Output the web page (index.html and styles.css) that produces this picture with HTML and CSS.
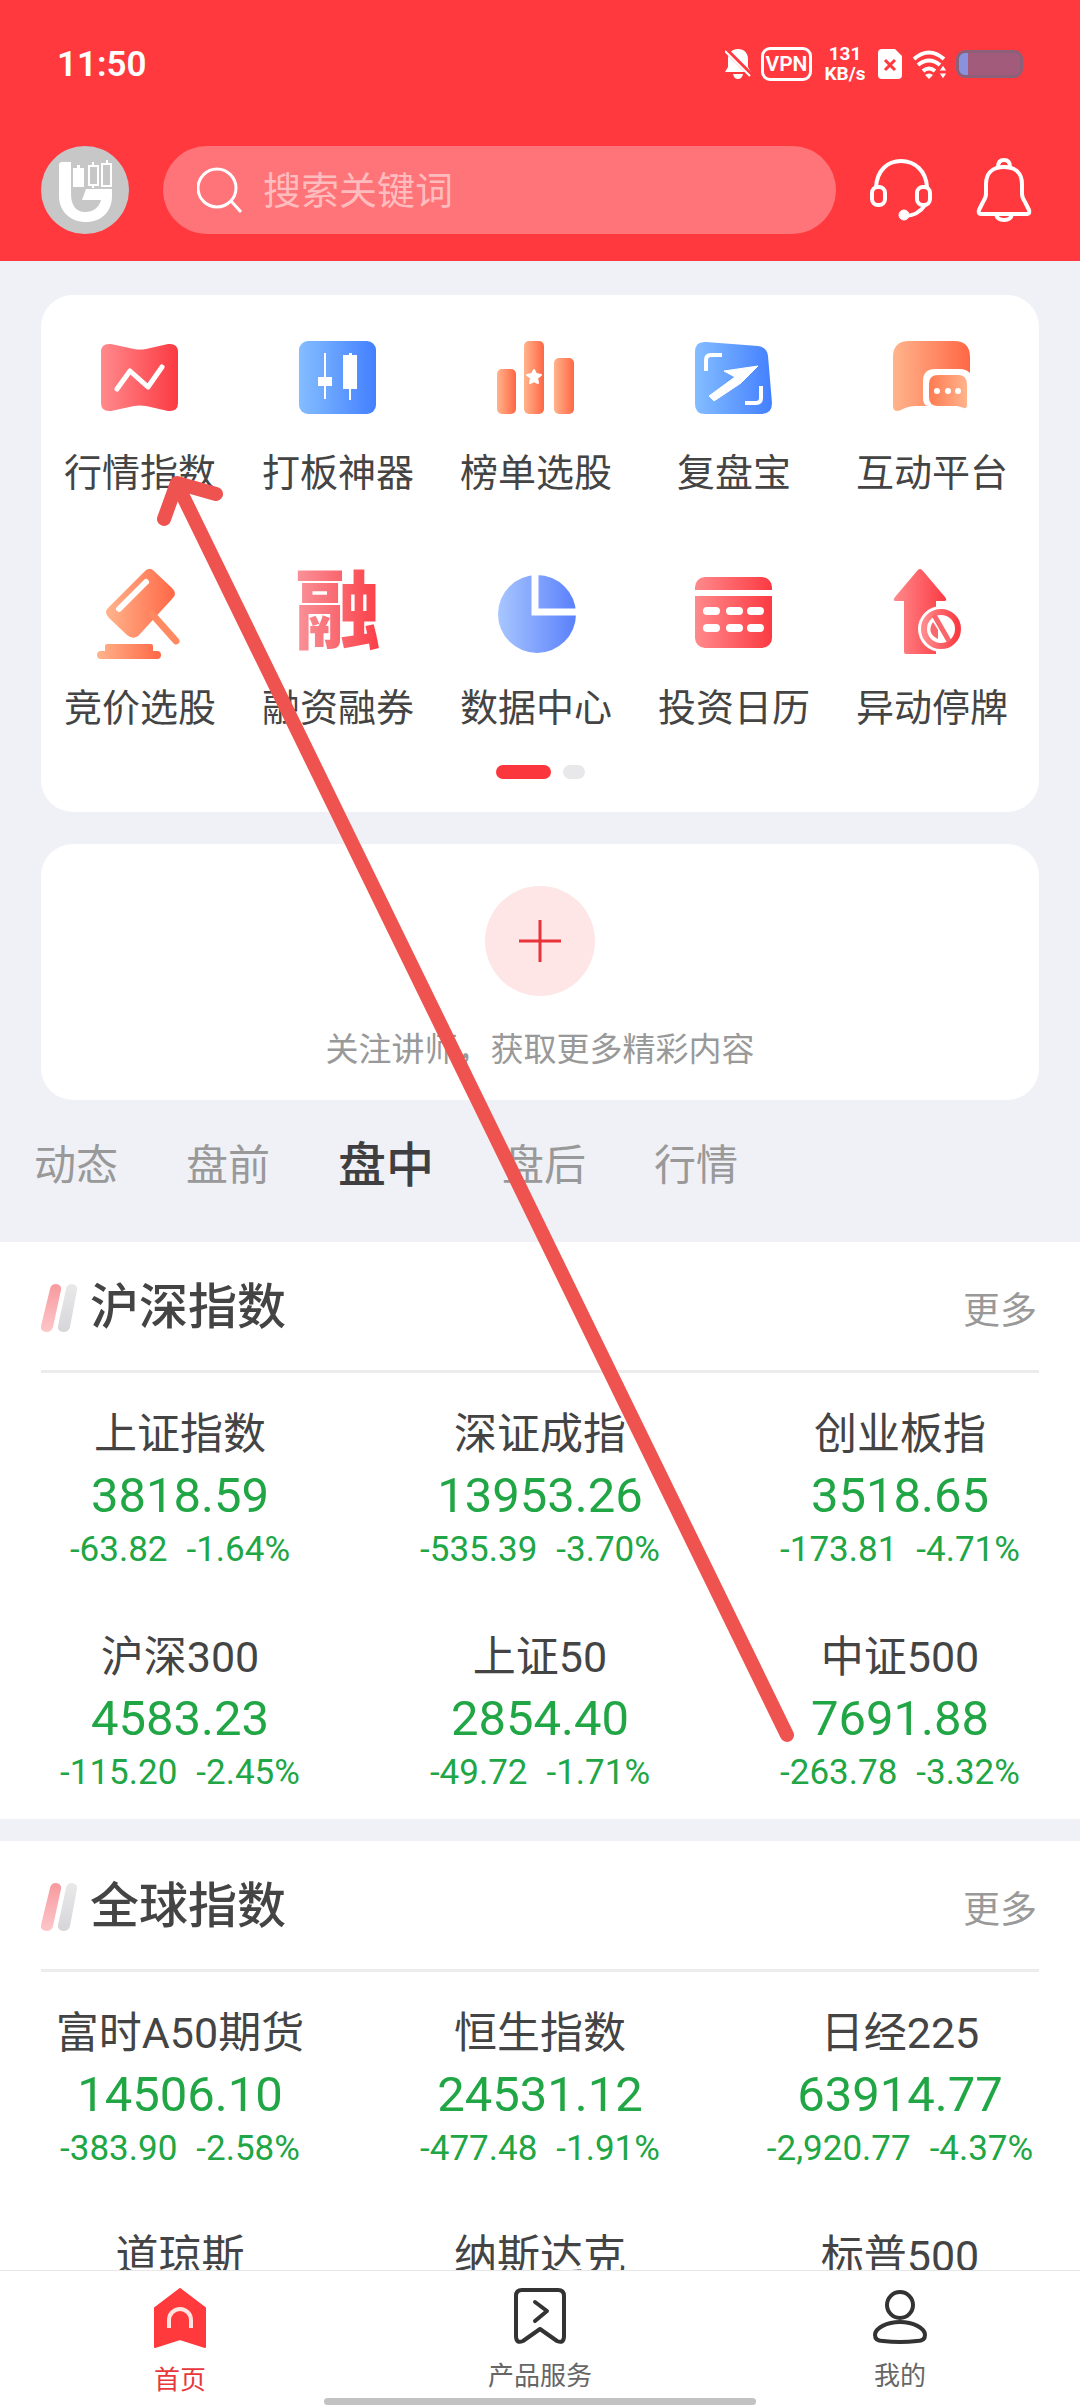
FILE: index.html
```html
<!DOCTYPE html>
<html lang="zh-CN">
<head>
  <meta charset="UTF-8">
  <meta name="viewport" content="width=device-width, initial-scale=1.0">
  <title>首页</title>
  <link rel="stylesheet" href="styles.css">
</head>
<body>

  <!-- Shared gradients -->
  <svg class="defs" width="0" height="0" aria-hidden="true">
    <defs>
      <linearGradient id="red"><stop offset="0" stop-color="#ff8a8c"/><stop offset="1" stop-color="#fb3a42"/></linearGradient>
      <linearGradient id="blue"><stop offset="0" stop-color="#84bdff"/><stop offset="1" stop-color="#4380ff"/></linearGradient>
      <linearGradient id="pie"><stop offset="0" stop-color="#a8c6ff"/><stop offset="1" stop-color="#5a80fb"/></linearGradient>
      <linearGradient id="orange"><stop offset="0" stop-color="#ffb48c"/><stop offset="1" stop-color="#ff6745"/></linearGradient>
      <linearGradient id="orangeBack"><stop offset="0" stop-color="#ff7a52"/><stop offset="1" stop-color="#ffb48c"/></linearGradient>
      <linearGradient id="slash" x1="0" y1="0" x2="0" y2="1"><stop offset="0" stop-color="#f79a9f"/><stop offset="1" stop-color="#fdc6c8"/></linearGradient>
      <linearGradient id="slashGray" x1="0" y1="0" x2="0" y2="1"><stop offset="0" stop-color="#e9e9ea"/><stop offset="1" stop-color="#d6d6d9"/></linearGradient>
      <symbol id="slashes" viewBox="0 0 40 48">
        <path fill="url(#slash)" d="M9 5Q10 0 15 0Q21 1 20 6L12 43Q11 48 5 48Q-1 47 0 42Z"/>
        <path fill="url(#slashGray)" d="M25 5Q26 0 31 0Q37 1 36 6L29 43Q28 48 22 48Q16 47 17 42Z"/>
      </symbol>
    </defs>
  </svg>

  <header class="header">
    <div class="status-bar">
      <span class="time">11:50</span>
      <div class="status-icons">
        <svg width="26" height="30" viewBox="0 0 26 30">
          <path fill="#fff" d="M13 0c6 0 10 4 10 10v8l3 5H0l3-5v-8C3 4 7 0 13 0zM8 25h10q-1 5-5 5t-5-5z"/>
          <path stroke="#ff393e" stroke-width="5" d="M0 0l27 27"/>
          <path stroke="#fff" stroke-width="2" d="M0 2l25 25"/>
        </svg>
        <span class="vpn">VPN</span>
        <span class="speed">131<br>KB/s</span>
        <svg width="24" height="30" viewBox="0 0 24 30">
          <path fill="#fff" d="M4 0h13l7 7v19q0 4-4 4H4q-4 0-4-4V4q0-4 4-4z"/>
          <path stroke="#ff393e" stroke-width="3" d="M7 11l10 10M17 11L7 21"/>
        </svg>
        <svg width="34" height="29" viewBox="0 0 34 29" fill="none" stroke="#fff" stroke-width="4">
          <path d="M2 9q15-13 30 0M6 15q11-9 22 0M11 21q6-5 12 0"/>
          <path fill="#fff" stroke="none" d="M13 25q4-3 8 0l-4 4z"/>
          <path fill="#fff" stroke="#ff393e" stroke-width="1" d="M27 21l4-6 4 6zM27 23h8l-4 6z"/>
        </svg>
        <span class="battery"></span>
      </div>
    </div>

    <div class="search-row">
      <a href="#" class="avatar" aria-label="个人中心">
        <svg width="88" height="88" viewBox="0 0 88 88">
          <circle cx="44" cy="44" r="44" fill="#c7c7c7"/>
          <path fill="#fff" d="M18 19q0-3 3-3h9v32c0 11 5 18 14 18 8 0 14-4 16-12H41l4-11h26v7c0 16-11 26-26 26S18 66 18 50z"/>
          <path fill="#fff" d="M32 22h4v-3h3v3h4v19H32z"/>
          <path fill="none" stroke="#fff" stroke-width="2" d="M48 20h9v19h-9zM52 16v4M52 39v3M61 18h9v22h-9zM66 14v4"/>
        </svg>
      </a>
      <div class="search">
        <label for="searchInput" aria-label="搜索">
          <svg width="46" height="46" viewBox="0 0 46 46" fill="none" stroke="#fff" stroke-width="3">
            <circle cx="20" cy="21" r="19"/>
            <path d="M34 34l10 11"/>
          </svg>
        </label>
        <input type="text" id="searchInput" placeholder="搜索关键词">
      </div>
      <button class="icon-button" aria-label="客服">
        <svg width="64" height="64" viewBox="0 0 64 64" fill="none" stroke="#fff" stroke-width="4">
          <path d="M6 29C7 13 17 3 31 3s25 10 26 26"/>
          <rect x="2" y="29" width="13" height="18" rx="6"/>
          <rect x="47" y="29" width="13" height="18" rx="6"/>
          <path d="M55 47Q48 58 34 58"/>
          <circle cx="34" cy="57" r="5" fill="#fff" stroke-width="1"/>
        </svg>
      </button>
      <button class="icon-button bell" aria-label="消息">
        <svg width="64" height="64" viewBox="0 0 64 64" fill="none" stroke="#fff" stroke-width="4" stroke-linejoin="round">
          <path d="M32 9C20 9 14 16 14 26v10c0 3-1 5-3 8L7 52q-1 4 2 4h46q3 0 2-4l-4-8c-2-3-3-5-3-8V26C50 16 44 9 32 9z"/>
          <path d="M26 9q0-7 6-7t6 7M24 56q1 6 8 6t8-6"/>
        </svg>
      </button>
    </div>
  </header>

  <main class="content">
    <section class="card menu-card">
      <nav class="menu">
        <a href="#" class="menu-item">
          <svg class="menu-icon" viewBox="0 0 92 92">
            <path fill="url(#red)" d="M7 20Q7 11 17 12L40 17Q46 18 52 17L74 12Q84 11 84 20V71Q84 80 74 79L52 74Q46 73 40 74L17 79Q7 80 7 71Z"/>
            <path fill="none" stroke="#fff" stroke-width="5" stroke-linecap="round" stroke-linejoin="round" d="M23 57L36 39L54 55L68 35"/>
          </svg>
          <span>行情指数</span>
        </a>
        <a href="#" class="menu-item">
          <svg class="menu-icon" viewBox="0 0 92 92">
            <rect x="7" y="9" width="77" height="73" rx="9" fill="url(#blue)"/>
            <path fill="#fff" d="M32 21h2v24h6v9h-6v13h-2V54h-6v-9h6zM57 21h3v2h5v34h-6v11h-2V57h-6V23h6z"/>
          </svg>
          <span>打板神器</span>
        </a>
        <a href="#" class="menu-item">
          <svg class="menu-icon" viewBox="0 0 92 92">
            <rect x="7" y="37" width="19" height="45" rx="5" fill="url(#orange)"/>
            <rect x="34" y="9" width="20" height="73" rx="5" fill="url(#orange)"/>
            <rect x="64" y="26" width="20" height="56" rx="5" fill="url(#orange)"/>
            <path fill="#fff" stroke="#fff" stroke-width="2" stroke-linejoin="round" d="M44 38l2 4 5 1-4 3 1 5-4-2-4 2 1-5-4-3 5-1z"/>
          </svg>
          <span>榜单选股</span>
        </a>
        <a href="#" class="menu-item">
          <svg class="menu-icon" viewBox="0 0 92 92">
            <path fill="url(#blue)" d="M7 20Q7 9 18 10L70 14Q79 15 80 24L84 71Q84 82 73 82H17Q7 82 7 72Z"/>
            <path fill="none" stroke="#fff" stroke-width="4" d="M18 39V28Q18 23 23 23H34M73 54V66Q73 71 68 71H57"/>
            <path fill="#fff" stroke="#fff" stroke-linejoin="round" d="M70 34L36 39L47 45L21 64L26 69L53 51Z"/>
          </svg>
          <span>复盘宝</span>
        </a>
        <a href="#" class="menu-item">
          <svg class="menu-icon" viewBox="0 0 92 92">
            <path fill="url(#orange)" d="M7 25Q7 9 23 9H68Q84 9 84 25V42L78 74H30Q22 74 15 78Q7 81 7 74Z"/>
            <path fill="#fff" d="M37 49Q37 37 49 37H75Q81 37 86 43V84H42V74Q37 73 37 66Z"/>
            <path fill="url(#orangeBack)" d="M43 52Q43 43 52 43H72Q81 43 81 52V73Q81 78 75 75L71 74H52Q43 74 43 65Z"/>
            <path fill="none" stroke="#fff" stroke-width="6" stroke-linecap="round" d="M51 59h0M62 59h0M72 59h0"/>
          </svg>
          <span>互动平台</span>
        </a>
        <a href="#" class="menu-item">
          <svg class="menu-icon" viewBox="0 0 92 92">
            <path fill="url(#orange)" d="M50 5Q55 -1 60 4L78 21Q84 27 78 32L46 67Q40 74 33 68L15 51Q9 45 15 40Z"/>
            <path stroke="#fff" stroke-width="6" stroke-linecap="round" d="M25 42L52 15"/>
            <path stroke="#ff8a62" stroke-width="7" stroke-linecap="round" d="M58 47L82 74"/>
            <path fill="url(#orange)" d="M13 77H57Q59 77 59 79V84H63Q67 84 67 88T63 92H7Q3 92 3 88T7 84H11V79Q11 77 13 77Z"/>
          </svg>
          <span>竞价选股</span>
        </a>
        <a href="#" class="menu-item">
          <span class="menu-icon menu-glyph">融</span>
          <span>融资融券</span>
        </a>
        <a href="#" class="menu-item">
          <svg class="menu-icon" viewBox="0 0 92 92">
            <circle cx="47" cy="47" r="39" fill="url(#pie)"/>
            <path fill="none" stroke="#fff" stroke-width="7" d="M45 6V45H88"/>
          </svg>
          <span>数据中心</span>
        </a>
        <a href="#" class="menu-item">
          <svg class="menu-icon" viewBox="0 0 92 92">
            <rect x="7" y="10" width="77" height="71" rx="10" fill="url(#red)"/>
            <path stroke="#fff" stroke-width="6" d="M6 26H85"/>
            <path stroke="#fff" stroke-width="8" stroke-linecap="round" d="M19 44h9M42 44h9M63 44h9M19 61h9M42 61h9M63 61h9"/>
          </svg>
          <span>投资日历</span>
        </a>
        <a href="#" class="menu-item">
          <svg class="menu-icon" viewBox="0 0 92 92">
            <path fill="url(#red)" d="M31 4Q34 0 37 4L59 30Q62 34 58 34H50V87H20Q18 87 18 85V34H10Q6 34 9 30Z"/>
            <circle cx="55" cy="62" r="23" fill="#fff"/>
            <circle cx="55" cy="62" r="17" fill="none" stroke="url(#red)" stroke-width="6"/>
            <path fill="none" stroke="#f9666b" stroke-width="5" d="M48 48L63 74"/>
            <path fill="#f9666b" d="M47 55L52 63V72Q40 66 47 55Z"/>
          </svg>
          <span>异动停牌</span>
        </a>
      </nav>
      <div class="pager">
        <span class="pager-dot active"></span>
        <span class="pager-dot"></span>
      </div>
    </section>

    <section class="card follow-card">
      <button class="follow-button" aria-label="关注讲师">
        <svg width="42" height="42" viewBox="0 0 42 42" stroke="#e8333b" stroke-width="3">
          <path d="M21 0V42M0 21H42"/>
        </svg>
      </button>
      <p>关注讲师，获取更多精彩内容</p>
    </section>

    <div class="tabs">
      <button class="tab">动态</button>
      <button class="tab">盘前</button>
      <button class="tab active">盘中</button>
      <button class="tab">盘后</button>
      <button class="tab">行情</button>
    </div>

    <section class="panel">
      <div class="panel-header">
        <svg width="40" height="48"><use href="#slashes"/></svg>
        <h2>沪深指数</h2>
        <a href="#" class="more">更多</a>
      </div>
      <div class="index-grid">
        <a href="#" class="index">
          <span class="name">上证指数</span>
          <span class="value">3818.59</span>
          <span class="change"><span>-63.82</span><span>-1.64%</span></span>
        </a>
        <a href="#" class="index">
          <span class="name">深证成指</span>
          <span class="value">13953.26</span>
          <span class="change"><span>-535.39</span><span>-3.70%</span></span>
        </a>
        <a href="#" class="index">
          <span class="name">创业板指</span>
          <span class="value">3518.65</span>
          <span class="change"><span>-173.81</span><span>-4.71%</span></span>
        </a>
        <a href="#" class="index">
          <span class="name">沪深300</span>
          <span class="value">4583.23</span>
          <span class="change"><span>-115.20</span><span>-2.45%</span></span>
        </a>
        <a href="#" class="index">
          <span class="name">上证50</span>
          <span class="value">2854.40</span>
          <span class="change"><span>-49.72</span><span>-1.71%</span></span>
        </a>
        <a href="#" class="index">
          <span class="name">中证500</span>
          <span class="value">7691.88</span>
          <span class="change"><span>-263.78</span><span>-3.32%</span></span>
        </a>
      </div>
    </section>

    <section class="panel">
      <div class="panel-header">
        <svg width="40" height="48"><use href="#slashes"/></svg>
        <h2>全球指数</h2>
        <a href="#" class="more">更多</a>
      </div>
      <div class="index-grid">
        <a href="#" class="index">
          <span class="name">富时A50期货</span>
          <span class="value">14506.10</span>
          <span class="change"><span>-383.90</span><span>-2.58%</span></span>
        </a>
        <a href="#" class="index">
          <span class="name">恒生指数</span>
          <span class="value">24531.12</span>
          <span class="change"><span>-477.48</span><span>-1.91%</span></span>
        </a>
        <a href="#" class="index">
          <span class="name">日经225</span>
          <span class="value">63914.77</span>
          <span class="change"><span>-2,920.77</span><span>-4.37%</span></span>
        </a>
        <a href="#" class="index">
          <span class="name">道琼斯</span>
        </a>
        <a href="#" class="index">
          <span class="name">纳斯达克</span>
        </a>
        <a href="#" class="index">
          <span class="name">标普500</span>
        </a>
      </div>
    </section>
  </main>

  <nav class="tab-bar">
    <a href="#" class="tab-link active">
      <svg width="54" height="60" viewBox="0 0 54 60">
        <path fill="#ff393c" stroke="#ff393c" stroke-width="2" stroke-linejoin="round" d="M27 1L52 20V59L27 51L2 59V20Z"/>
        <path fill="none" stroke="#ffe3e0" stroke-width="4" d="M16 40V32a11 11 0 0 1 22 0V40"/>
      </svg>
      <span>首页</span>
    </a>
    <a href="#" class="tab-link">
      <svg width="54" height="56" viewBox="0 0 54 56" fill="none" stroke="#333" stroke-width="4" stroke-linejoin="round">
        <path d="M9 2H45Q51 2 51 8V48Q51 56 44 53L27 41L10 53Q3 56 3 48V8Q3 2 9 2Z"/>
        <path stroke-linecap="round" d="M22 14L34 23L22 33"/>
      </svg>
      <span>产品服务</span>
    </a>
    <a href="#" class="tab-link">
      <svg width="54" height="56" viewBox="0 0 54 56" fill="none" stroke="#333" stroke-width="4">
        <circle cx="27" cy="17" r="13"/>
        <path d="M27 34C40 34 52 40 52 47Q52 53 44 53Q27 55 10 53Q2 53 2 47C2 40 14 34 27 34Z"/>
      </svg>
      <span>我的</span>
    </a>
    <span class="home-indicator"></span>
  </nav>

  <!-- Hand-drawn arrow pointing at 行情指数 -->
  <svg class="arrow" width="660" height="1280" viewBox="0 0 660 1280" fill="none" stroke="#ef5350" stroke-width="14" stroke-linecap="round" stroke-linejoin="round" aria-hidden="true">
    <path d="M28 16L637 1265"/>
    <path d="M14 49L27 13L66 24"/>
  </svg>

</body>
</html>
```
FILE: styles.css
```css
* {
  box-sizing: border-box;
}

body {
  position: relative;
  margin: 0;
  height: 100vh;
  display: flex;
  flex-direction: column;
  overflow: hidden;
  background-color: #f0f1f6;
  color: #444;
  font-family: Roboto, "Noto Sans CJK SC", sans-serif;
}

a {
  color: inherit;
  text-decoration: none;
}

button {
  padding: 0;
  border: none;
  background: none;
  font-family: inherit;
  cursor: pointer;
}

svg {
  display: block;
  flex: none;
}

.defs {
  position: absolute;
}

/* Header */
.header {
  flex: none;
  padding: 0 41px 27px;
  background-color: #ff393e;
  color: #fff;
}

.status-bar {
  display: flex;
  align-items: center;
  justify-content: space-between;
  height: 128px;
  padding: 0 16px;
}

.time {
  font-size: 35px;
  font-weight: 600;
}

.status-icons {
  display: flex;
  align-items: center;
  gap: 10px;
}

.vpn {
  width: 51px;
  height: 34px;
  border: 3px solid #fff;
  border-radius: 9px;
  font-size: 21px;
  font-weight: 600;
  line-height: 29px;
  text-align: center;
}

.speed {
  width: 46px;
  font-size: 19px;
  font-weight: 700;
  line-height: 20px;
  text-align: center;
}

.battery {
  width: 67px;
  height: 28px;
  border: 3px solid #8b6078;
  border-radius: 9px;
  background: linear-gradient(to right, #8a92dd 9px, #a35b7c 9px);
}

.search-row {
  display: flex;
  align-items: center;
  gap: 34px;
  padding: 18px 3px 0 0;
}

.search {
  flex: 1;
  display: flex;
  align-items: center;
  gap: 20px;
  height: 88px;
  padding: 0 34px;
  border-radius: 44px;
  background-color: #ff7478;
}

.search input {
  flex: 1;
  min-width: 0;
  padding: 2px 0 0;
  border: none;
  outline: none;
  background: none;
  color: #fff;
  font-family: inherit;
  font-size: 38px;
}

.search input::placeholder {
  color: #ffbcbe;
}

.bell {
  margin-left: 4px;
}

.content {
  flex: 1;
  min-height: 0;
  overflow: hidden;
  padding-top: 34px;
}

.card {
  margin: 0 41px 32px;
  border-radius: 32px;
  background-color: #fff;
}

.menu-card {
  padding: 37px 0 33px;
}

.menu {
  display: grid;
  grid-template-columns: repeat(5, 1fr);
  row-gap: 70px;
  padding-right: 8px;
}

.menu-item {
  display: flex;
  flex-direction: column;
  align-items: center;
  gap: 25px;
  font-size: 38px;
  line-height: 48px;
  white-space: nowrap;
}

.menu-icon {
  width: 92px;
  height: 92px;
}

.menu-glyph {
  background: linear-gradient(to right, #f9979e, #fb3a42);
  background-clip: text;
  -webkit-background-clip: text;
  color: transparent;
  font-size: 86px;
  font-weight: 900;
  line-height: 92px;
  text-align: center;
}

.pager {
  display: flex;
  justify-content: center;
  gap: 12px;
  margin-top: 33px;
}

.pager-dot {
  width: 22px;
  height: 14px;
  border-radius: 7px;
  background-color: #e8e8ea;
}

.pager-dot.active {
  width: 55px;
  background-color: #fb363c;
}

.follow-card {
  display: flex;
  flex-direction: column;
  align-items: center;
  padding: 42px 0 26px;
}

.follow-button {
  display: flex;
  align-items: center;
  justify-content: center;
  width: 110px;
  height: 110px;
  border-radius: 50%;
  background-color: #fee6e7;
}

.follow-card p {
  margin: 30px 0 0;
  color: #999;
  font-size: 33px;
  line-height: 48px;
}

.tabs {
  display: flex;
  align-items: center;
  gap: 68px;
  height: 110px;
  padding: 0 34px 42px;
}

.tab {
  color: #999;
  font-size: 42px;
  line-height: 60px;
}

.tab.active {
  color: #3f3f42;
  font-size: 48px;
  font-weight: 500;
}

/* Index panels */
.panel {
  margin-bottom: 22px;
  padding-bottom: 25px;
  background-color: #fff;
}

.panel-header {
  display: flex;
  align-items: center;
  gap: 9px;
  height: 131px;
  margin: 0 41px;
  padding-top: 4px;
  border-bottom: 3px solid #ececec;
}

.panel-header h2 {
  flex: 1;
  margin: 0;
  font-size: 49px;
  font-weight: 500;
  line-height: 64px;
}

.more {
  padding-right: 2px;
  color: #999;
  font-size: 37px;
}

.index-grid {
  display: grid;
  grid-template-columns: repeat(3, 1fr);
  row-gap: 57px;
  padding-top: 32px;
}

.index {
  display: flex;
  flex-direction: column;
  align-items: center;
  white-space: nowrap;
}

.name {
  font-size: 43px;
  line-height: 58px;
}

.value {
  color: #20a644;
  font-size: 49px;
  line-height: 66px;
}

.change {
  display: flex;
  gap: 19px;
  color: #20a644;
  font-size: 35px;
  line-height: 42px;
}

/* Bottom tab bar */
.tab-bar {
  position: relative;
  flex: none;
  display: grid;
  grid-template-columns: repeat(3, 1fr);
  height: 138px;
  padding-top: 17px;
  border-top: 1px solid #e8e8e8;
  background-color: #fff;
}

.tab-link {
  display: flex;
  flex-direction: column;
  align-items: center;
  gap: 14px;
  color: #666;
  font-size: 26px;
  line-height: 36px;
}

.tab-link.active {
  color: #e8383d;
}

.home-indicator {
  position: absolute;
  bottom: 3px;
  left: 50%;
  width: 40%;
  height: 7px;
  border-radius: 4px;
  background-color: #c2c2c2;
  transform: translateX(-50%);
}

.arrow {
  position: absolute;
  top: 470px;
  left: 150px;
  pointer-events: none;
}
```
